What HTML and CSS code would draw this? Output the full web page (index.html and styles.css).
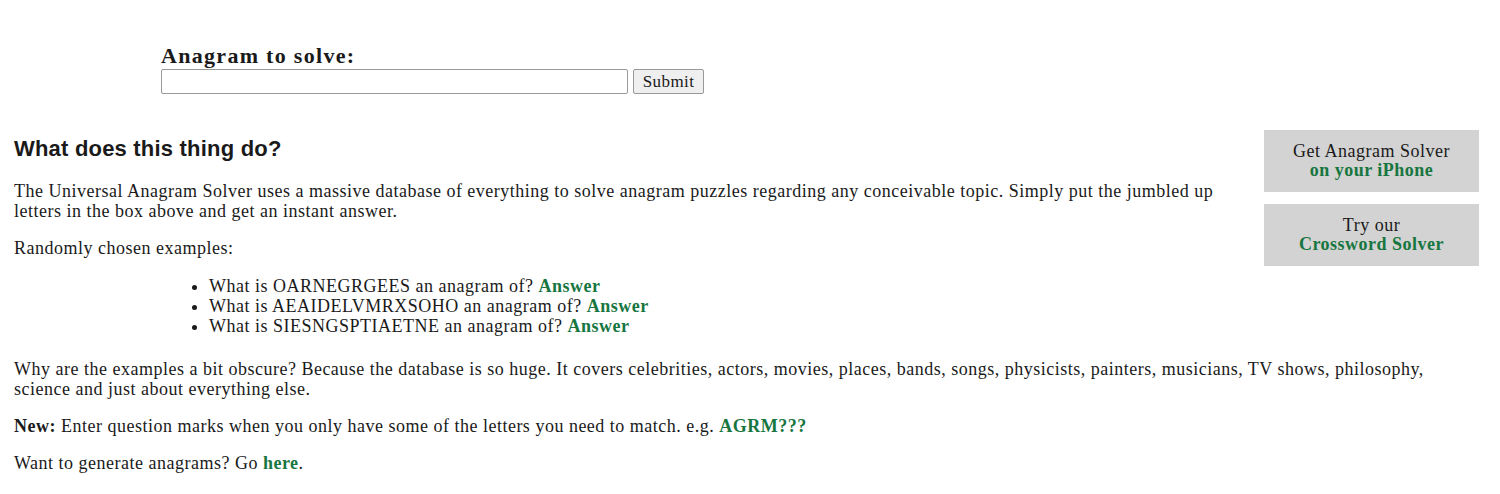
FILE: index.html
```html
<!DOCTYPE html>
<html>
<head>
  <title>Anagram Solver</title>
  <link rel="stylesheet" href="styles.css">
</head>
<body>
  <form class="solver" action="/" method="get">
    <label for="anagram" class="solver-label">Anagram to solve:</label>
    <input type="text" id="anagram" name="anagram" class="solver-input"><input type="submit" class="solver-button" value="Submit">
  </form>

  <div class="sidebar">
    <a class="promo" href="#">Get Anagram Solver<br><b>on your iPhone</b></a>
    <a class="promo" href="#">Try our<br><b>Crossword Solver</b></a>
  </div>

  <h2>What does this thing do?</h2>
  <p>The Universal Anagram Solver uses a massive database of everything to solve anagram puzzles regarding any conceivable topic. Simply put the jumbled up letters in the box above and get an instant answer.</p>
  <p>Randomly chosen examples:</p>
  <ul class="examples">
    <li>What is OARNEGRGEES an anagram of? <a href="#">Answer</a></li>
    <li>What is AEAIDELVMRXSOHO an anagram of? <a href="#">Answer</a></li>
    <li>What is SIESNGSPTIAETNE an anagram of? <a href="#">Answer</a></li>
  </ul>
  <p>Why are the examples a bit obscure? Because the database is so huge. It covers celebrities, actors, movies, places, bands, songs, physicists, painters, musicians, TV shows, philosophy, science and just about everything else.</p>
  <p><b>New:</b> Enter question marks when you only have some of the letters you need to match. e.g. <a href="#">AGRM???</a></p>
  <p>Want to generate anagrams? Go <a href="#">here</a>.</p>
</body>
</html>
```

FILE: styles.css
```css
body {
  font-family: "Liberation Serif", serif;
  font-size: 18px;
  letter-spacing: 0.5px;
  line-height: 20px;
  color: #1a1a1a;
  margin: 0;
  padding: 43px 21px 0 14px;
}

a {
  color: #17763f;
  font-weight: bold;
  text-decoration: none;
}

.solver {
  margin: 0 0 0 147px;
}

.solver-label {
  display: block;
  font-size: 22px;
  letter-spacing: 1.3px;
  font-weight: bold;
  line-height: 26px;
}

.solver-input {
  width: 467px;
  height: 25px;
  box-sizing: border-box;
  border: 1px solid #999;
  border-radius: 2px;
  margin: 0;
  vertical-align: top;
}

.solver-button {
  font-family: "Liberation Serif", serif;
  font-size: 17px;
  letter-spacing: 0.4px;
  width: 71px;
  height: 25px;
  padding: 0;
  margin: 0 0 0 5px;
  color: #1a1a1a;
  background: #efefef;
  border: 1px solid #999;
  border-radius: 2px;
  vertical-align: top;
}

.sidebar {
  float: right;
  width: 215px;
  margin: 36px 0 0 20px;
}

.promo {
  display: block;
  background: #d3d3d3;
  color: #1a1a1a;
  font-weight: normal;
  text-align: center;
  line-height: 19px;
  padding: 12px 0;
  margin-bottom: 12px;
}

.promo b {
  color: #17763f;
}

h2 {
  font-family: "Liberation Sans", Arial, sans-serif;
  font-size: 22px;
  letter-spacing: 0.2px;
  line-height: 24px;
  margin: 43px 0 20px;
}

p {
  margin: 0 0 17px;
}

.examples {
  margin: 18px 0 23px 178px;
  padding-left: 17px;
}
```
